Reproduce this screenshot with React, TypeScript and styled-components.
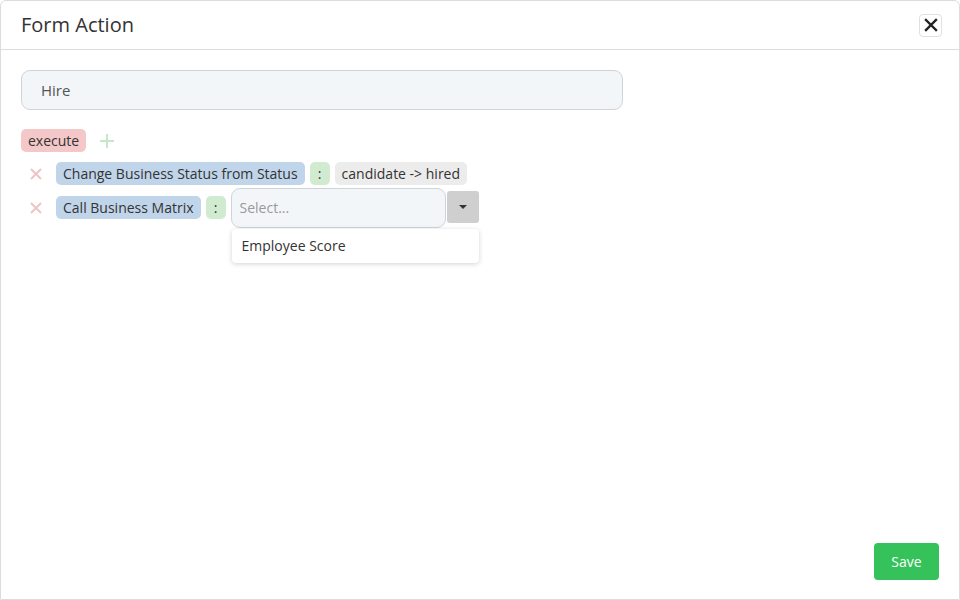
import styled, { createGlobalStyle } from "styled-components";

const GlobalStyle = createGlobalStyle`
  html, body {
    margin: 0;
    padding: 0;
    background: #ffffff;
  }
  body {
    font-family: "Open Sans", "Liberation Sans", sans-serif;
    color: #333;
  }
`;

interface ActionRow {
  id: string;
  label: string;
  value?: string;
}

const rows: ActionRow[] = [
  { id: "status", label: "Change Business Status from Status", value: "candidate -> hired" },
  { id: "matrix", label: "Call Business Matrix" },
];

const App = () => {
  return (
    <>
      <GlobalStyle />
      <Modal>
        <Header>
          <Title>Form Action</Title>
          <CloseButton aria-label="close">
            <svg width="14" height="14" viewBox="0 0 14 14">
              <path d="M2 2 L12 12 M12 2 L2 12" stroke="#222" strokeWidth="2.4" strokeLinecap="square" />
            </svg>
          </CloseButton>
        </Header>
        <Body>
          <NameInput defaultValue="Hire" />
          <TriggerRow>
            <Tag tone="red">execute</Tag>
            <AddIcon>
              <svg width="16" height="16" viewBox="0 0 16 16">
                <path d="M8 1 V15 M1 8 H15" stroke="#c6e6c6" strokeWidth="2" />
              </svg>
            </AddIcon>
          </TriggerRow>
          {rows.map((row) => (
            <Row key={row.id}>
              <RemoveIcon>
                <svg width="12" height="12" viewBox="0 0 12 12">
                  <path d="M1 1 L11 11 M11 1 L1 11" stroke="#f0c2c2" strokeWidth="1.8" />
                </svg>
              </RemoveIcon>
              <Tag tone="blue">{row.label}</Tag>
              <Tag tone="green" wide>:</Tag>
              {row.value ? (
                <Tag tone="gray">{row.value}</Tag>
              ) : (
                <SelectWrap>
                  <SelectBox>
                    <SelectInput placeholder="Select..." />
                    <CaretButton>
                      <svg width="8" height="4" viewBox="0 0 8 4">
                        <path d="M0 0 H8 L4 4 Z" fill="#333" />
                      </svg>
                    </CaretButton>
                  </SelectBox>
                  <Menu>
                    <MenuItem>Employee Score</MenuItem>
                  </Menu>
                </SelectWrap>
              )}
            </Row>
          ))}
        </Body>
        <Footer>
          <SaveButton>Save</SaveButton>
        </Footer>
      </Modal>
    </>
  );
};

const Modal = styled.div`
  box-sizing: border-box;
  width: 960px;
  height: 600px;
  border: 1px solid #dcdcdc;
  border-radius: 6px 6px 0 0;
  display: flex;
  flex-direction: column;
  background: #fff;
`;

const Header = styled.div`
  height: 48px;
  border-bottom: 1px solid #dedede;
  display: flex;
  align-items: center;
  justify-content: space-between;
  padding: 0 17px 0 20px;
`;

const Title = styled.h1`
  margin: 0;
  font-size: 20px;
  font-weight: 400;
  color: #333;
  padding-bottom: 1px;
`;

const CloseButton = styled.button`
  width: 23px;
  height: 23px;
  border: 1px solid #e0e0e0;
  border-radius: 4px;
  background: #fff;
  padding: 0;
  display: flex;
  align-items: center;
  justify-content: center;
  cursor: pointer;
`;

const Body = styled.div`
  flex: 1;
  padding: 20px 20px 0 20px;
  display: flex;
  flex-direction: column;
  align-items: flex-start;
`;

const NameInput = styled.input`
  box-sizing: border-box;
  width: 602px;
  height: 40px;
  border: 1px solid #d0d4d8;
  border-radius: 9px;
  background: #f3f6f9;
  padding: 0 19px;
  font-family: inherit;
  font-size: 15px;
  color: #555;
  outline: none;
  margin-bottom: 19px;
`;

const TriggerRow = styled.div`
  display: flex;
  align-items: center;
  gap: 13px;
  margin-bottom: 10px;
`;

const Row = styled.div`
  display: flex;
  align-items: center;
  gap: 5px;
  height: 23px;
  margin-bottom: 11px;
`;

const tones = {
  red: "#f4c8c8",
  blue: "#c0d5ea",
  green: "#d0ebd0",
  gray: "#ececec",
};

const Tag = styled.span<{ tone: keyof typeof tones; wide?: boolean }>`
  display: inline-flex;
  align-items: center;
  justify-content: center;
  box-sizing: border-box;
  height: 23px;
  min-width: ${({ wide }) => (wide ? "20px" : "0")};
  padding: 0 7px;
  border-radius: 5px;
  background: ${({ tone }) => tones[tone]};
  font-size: 14px;
  color: #333;
  white-space: nowrap;
`;

const AddIcon = styled.span`
  display: inline-flex;
  width: 16px;
  height: 16px;
`;

const RemoveIcon = styled.span`
  display: inline-flex;
  align-items: center;
  justify-content: center;
  width: 30px;
`;

const SelectWrap = styled.div`
  position: relative;
  height: 23px;
  display: flex;
  align-items: center;
`;

const SelectBox = styled.div`
  display: flex;
  align-items: center;
  gap: 1px;
`;

const SelectInput = styled.input`
  box-sizing: border-box;
  width: 215px;
  height: 40px;
  border: 1px solid #d0d4d8;
  border-radius: 9px;
  background: #f3f6f9;
  padding: 0 8px;
  font-family: inherit;
  font-size: 14px;
  color: #555;
  outline: none;

  &::placeholder {
    color: #999;
  }
`;

const CaretButton = styled.button`
  width: 32px;
  height: 32px;
  margin-bottom: 1px;
  border: none;
  border-radius: 3px;
  background: #cfcfcf;
  padding: 0;
  display: flex;
  align-items: center;
  justify-content: center;
`;

const Menu = styled.div`
  position: absolute;
  left: 1px;
  top: 33px;
  width: 247px;
  height: 34px;
  background: #fff;
  border-radius: 4px;
  box-shadow: 0 1px 5px rgba(0, 0, 0, 0.18);
  display: flex;
  align-items: center;
  z-index: 2;
`;

const MenuItem = styled.div`
  padding: 0 10px 1px;
  font-size: 14px;
  color: #333;
`;

const Footer = styled.div`
  display: flex;
  justify-content: flex-end;
  padding: 0 20px 19px 0;
`;

const SaveButton = styled.button`
  width: 65px;
  height: 37px;
  border: none;
  border-radius: 4px;
  background: #35c25a;
  color: #fff;
  font-family: inherit;
  font-size: 14px;
  cursor: pointer;
`;

export default App;
